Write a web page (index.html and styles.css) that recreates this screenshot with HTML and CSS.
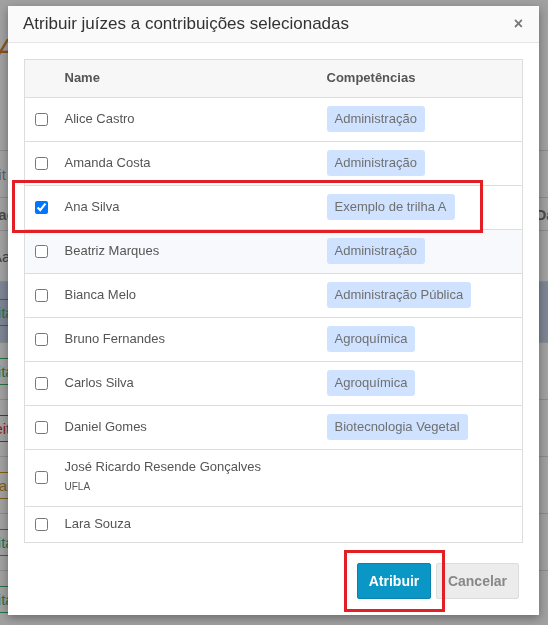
FILE: index.html
```html
<!DOCTYPE html>
<html lang="pt-BR">
<head>
  <meta charset="UTF-8">
  <meta name="viewport" content="width=device-width, initial-scale=1.0">
  <title>Atribuir juízes</title>
  <link rel="stylesheet" href="styles.css">
</head>
<body>
  <!-- page behind the dialog -->
  <div class="page">
    <h1 class="page-title">Avaliações</h1>
    <div class="list">
      <div class="list-row muted">Edit</div>
      <div class="list-row head"><span>Situação</span><span>Data</span></div>
      <div class="list-row small">Aa</div>
      <div class="list-row active"><span class="status ok">Aceita</span></div>
      <div class="list-row"><span class="status ok">Aceita</span></div>
      <div class="list-row"><span class="status bad">Rejeitada</span></div>
      <div class="list-row"><span class="status wait">Aguardar</span></div>
      <div class="list-row"><span class="status ok">Aceita</span></div>
      <div class="list-row"><span class="status ok">Aceita</span></div>
    </div>
  </div>

  <div class="backdrop"></div>

  <div class="modal">
    <div class="modal-header">
      <h4 class="modal-title">Atribuir juízes a contribuições selecionadas</h4>
      <button class="close" type="button">&times;</button>
    </div>

    <div class="modal-body">
      <table class="judges">
        <colgroup>
          <col class="col-check">
          <col class="col-name">
          <col>
        </colgroup>
        <thead>
          <tr>
            <th></th>
            <th>Name</th>
            <th>Competências</th>
          </tr>
        </thead>
        <tbody>
          <tr>
            <td><input type="checkbox"></td>
            <td>Alice Castro</td>
            <td><span class="badge">Administração</span></td>
          </tr>
          <tr>
            <td><input type="checkbox"></td>
            <td>Amanda Costa</td>
            <td><span class="badge">Administração</span></td>
          </tr>
          <tr>
            <td><input type="checkbox" checked></td>
            <td>Ana Silva</td>
            <td><span class="badge">Exemplo de trilha A</span></td>
          </tr>
          <tr class="hover">
            <td><input type="checkbox"></td>
            <td>Beatriz Marques</td>
            <td><span class="badge">Administração</span></td>
          </tr>
          <tr>
            <td><input type="checkbox"></td>
            <td>Bianca Melo</td>
            <td><span class="badge">Administração Pública</span></td>
          </tr>
          <tr>
            <td><input type="checkbox"></td>
            <td>Bruno Fernandes</td>
            <td><span class="badge">Agroquímica</span></td>
          </tr>
          <tr>
            <td><input type="checkbox"></td>
            <td>Carlos Silva</td>
            <td><span class="badge">Agroquímica</span></td>
          </tr>
          <tr>
            <td><input type="checkbox"></td>
            <td>Daniel Gomes</td>
            <td><span class="badge">Biotecnologia Vegetal</span></td>
          </tr>
          <tr>
            <td><input type="checkbox"></td>
            <td>José Ricardo Resende Gonçalves<div class="org">UFLA</div></td>
            <td></td>
          </tr>
          <tr>
            <td><input type="checkbox"></td>
            <td>Lara Souza</td>
            <td></td>
          </tr>
        </tbody>
      </table>
    </div>

    <div class="modal-footer">
      <button class="btn btn-primary" type="button">Atribuir</button>
      <button class="btn btn-default" type="button">Cancelar</button>
    </div>
  </div>

  <!-- highlight marks -->
  <div class="mark mark-row"></div>
  <div class="mark mark-btn"></div>
</body>
</html>
```

FILE: styles.css
```css
html, body {
  margin: 0;
  height: 100%;
  overflow: hidden;
}
body {
  font-family: "Liberation Sans", Arial, sans-serif;
  font-size: 13px;
  color: #555;
  background: #fff;
}

/* page under the backdrop */
.page {
  padding-top: 32px;
}
.page-title {
  margin: 0 0 0 -4px;
  font-size: 30px;
  font-weight: 300;
  font-style: italic;
  color: #d9822b;
  height: 118px;
}
.list-row {
  display: flex;
  justify-content: space-between;
  align-items: center;
  height: 56px;
  border-top: 1px solid #ddd;
  font-size: 15px;
  color: #999;
}
.list-row.muted {
  height: 46px;
  margin-left: -20px;
}
.list-row.head {
  height: 32px;
  font-weight: bold;
  color: #777;
  margin-left: -30px;
  margin-right: -20px;
}
.list-row.small {
  height: 50px;
  color: #666;
  margin-left: -8px;
}
.list-row.active {
  background: #c6d3ea;
  height: 60px;
}
.status {
  margin-left: -34px;
  padding: 4px 6px;
  border-top: 1px solid;
  border-bottom: 1px solid;
  font-size: 15px;
}
.status.ok { color: #3cb371; }
.status.bad { color: #d9363e; }
.status.wait { color: #c9922e; }

.backdrop {
  position: fixed;
  inset: 0;
  background: rgba(0, 0, 0, 0.37);
}

/* dialog */
.modal {
  position: absolute;
  left: 8px;
  top: 6px;
  width: 531px;
  background: #fff;
  box-shadow: 0 3px 9px rgba(0, 0, 0, 0.35);
}
.modal-header {
  display: flex;
  justify-content: space-between;
  align-items: center;
  height: 36px;
  padding: 0 16px 0 15px;
  background: #fafafa;
  border-bottom: 1px solid #e5e5e5;
}
.modal-title {
  margin: 0;
  font-size: 17px;
  font-weight: normal;
  color: #333;
}
.close {
  padding: 0;
  border: 0;
  background: none;
  font-family: "Liberation Sans", Arial, sans-serif;
  font-size: 16px;
  font-weight: bold;
  line-height: 1;
  color: #777;
  cursor: pointer;
}

.modal-body {
  padding: 16px 16px 0;
}
.judges {
  width: 100%;
  border-collapse: collapse;
  table-layout: fixed;
  border: 1px solid #ddd;
}
.col-check {
  width: 30px;
}
.col-name {
  width: 262px;
}
.judges th,
.judges td {
  padding: 8px 10px 9px;
  text-align: left;
  line-height: 18px;
  vertical-align: middle;
  border-top: 1px solid #ddd;
}
.judges th {
  padding: 9px 10px 10px;
  background: #f7f7f7;
  font-weight: bold;
  color: #555;
}
.judges th:first-child,
.judges td:first-child {
  padding-left: 10px;
  padding-right: 0;
}
.judges tr.hover td {
  background: #f7f9fc;
}
.judges input[type="checkbox"] {
  display: block;
  width: 13px;
  height: 13px;
  margin: 0;
}
.badge {
  display: inline-block;
  padding: 4px 8px;
  border-radius: 3px;
  background: #cfe2ff;
  color: #707070;
  white-space: nowrap;
}
.org {
  font-size: 10px;
  line-height: 20px;
  padding-top: 1px;
}

.modal-footer {
  display: flex;
  justify-content: flex-end;
  gap: 5px;
  padding: 20px 20px 16px;
}
.btn {
  height: 36px;
  padding: 0 10px;
  border-radius: 2px;
  font-family: "Liberation Sans", Arial, sans-serif;
  font-size: 14px;
  font-weight: bold;
  cursor: pointer;
}
.btn-primary {
  width: 74px;
  background: #0a97c6;
  border: 1px solid #0983ad;
  color: #fff;
}
.btn-default {
  width: 83px;
  background: #ececec;
  border: 1px solid #dcdcdc;
  color: #888;
}

.mark {
  position: absolute;
  border: 3px solid #e31e24;
  box-sizing: border-box;
}
.mark-row {
  left: 12px;
  top: 180px;
  width: 471px;
  height: 53px;
}
.mark-btn {
  left: 344px;
  top: 550px;
  width: 101px;
  height: 62px;
}
```
